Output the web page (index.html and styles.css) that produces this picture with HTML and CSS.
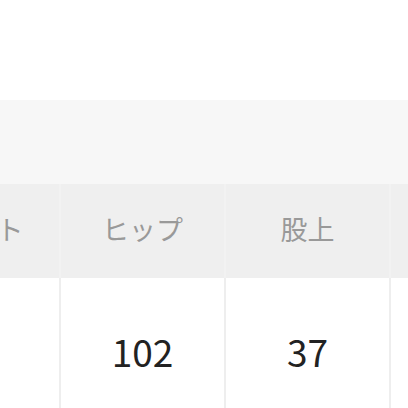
FILE: index.html
```html
<!DOCTYPE html>
<html lang="ja">
<head>
<meta charset="utf-8">
<link rel="stylesheet" href="styles.css">
</head>
<body>
<div class="page">
  <div class="spacer"></div>
  <div class="band"></div>
  <div class="table-wrap">
    <div class="table">
      <div class="cell head first">ウエスト</div>
      <div class="cell head">ヒップ</div>
      <div class="cell head">股上</div>
      <div class="cell head">股下</div>
      <div class="cell body first">76</div>
      <div class="cell body">102</div>
      <div class="cell body">37</div>
      <div class="cell body">74</div>
    </div>
  </div>
</div>
</body>
</html>
```

FILE: styles.css
```css
html, body {
  margin: 0;
  padding: 0;
  background: #ffffff;
  overflow: hidden;
}
.page {
  width: 408px;
  height: 408px;
  overflow: hidden;
  font-family: "Noto Sans CJK JP", "Noto Sans", sans-serif;
}
.spacer {
  height: 100px;
}
.band {
  height: 84px;
  background: #f7f7f7;
}
.table-wrap {
  overflow: hidden;
}
.table {
  display: grid;
  grid-template-columns: repeat(4, 165px);
  grid-template-rows: 94px 130px;
  margin-left: -106px;
  width: 660px;
}
.cell {
  display: flex;
  align-items: center;
  justify-content: center;
  border-left: 2px solid #f2f2f2;
}
.cell.first {
  border-left: none;
  padding-right: 14px;
}
.head {
  background: #efefef;
  color: #999999;
  font-size: 27px;
  padding-bottom: 6px;
  border-left-color: #f2f2f2;
}
.body {
  background: #ffffff;
  color: #222222;
  font-size: 37px;
  align-items: flex-start;
  padding-top: 48px;
  line-height: 50px;
  border-left-color: #eeeeee;
}
```
